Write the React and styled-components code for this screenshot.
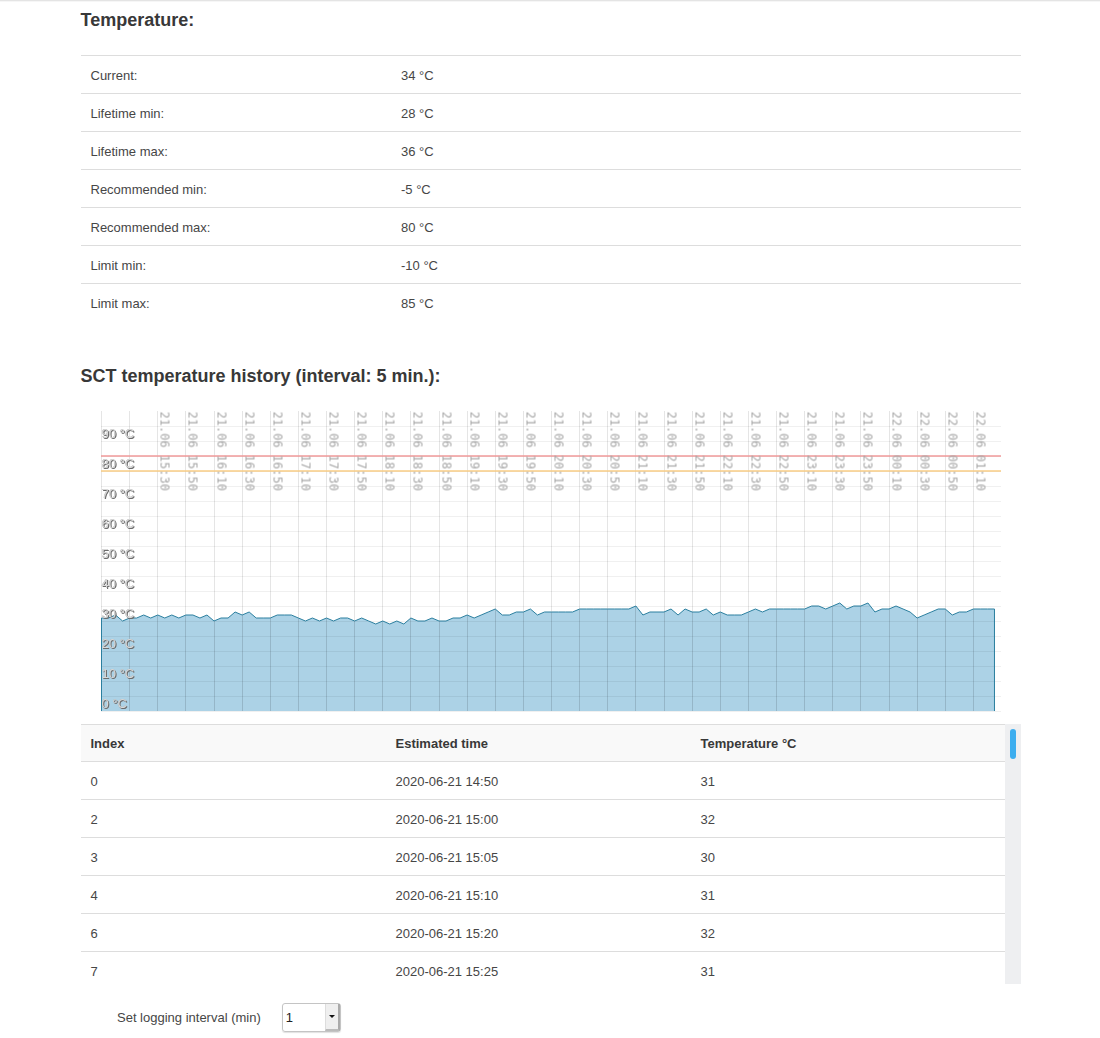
import React from "react";
import styled, { createGlobalStyle } from "styled-components";

const Global = createGlobalStyle`
  html, body { margin: 0; padding: 0; background: #fff; overflow: hidden; height: 1038px; }
  body { font-family: "Liberation Sans", Arial, sans-serif; font-size: 13px; color: #444; }
`;

const Page = styled.div`
  border-top: 1px solid #e4e4e4;
  box-shadow: inset 0 1px 0 #f6f6f6;
  box-sizing: border-box;
  height: 1038px;
  padding: 0 79px 0 81px;
  display: flex;
  flex-direction: column;
`;

const Title = styled.h4`
  margin: ${(p) => p.$top}px 0 ${(p) => p.$bottom}px -0.5px;
  font-size: 18px;
  line-height: 20px;
  font-weight: 700;
  color: #383838;
`;

const InfoTable = styled.div`
  display: flex;
  flex-direction: column;
`;

const InfoRow = styled.div`
  display: grid;
  grid-template-columns: 310.5px 1fr;
  height: 38px;
  box-sizing: border-box;
  border-top: 1px solid #ddd;
  align-items: center;
  padding: 1px 0 0 9.5px;
  color: #464646;
`;

const Chart = styled.svg`
  display: block;
  flex: none;
  width: 940px;
  height: 301px;
`;

const Tick = styled.text`
  font-family: "DejaVu Sans Mono", monospace;
  font-size: 12px;
  fill: #a6a6a6;
  filter: blur(0.25px);
`;

const Degree = styled.text`
  font-family: "Liberation Sans", Arial, sans-serif;
  font-size: 13px;
  fill: #d8d8d8;
  filter: drop-shadow(1px 1px 0.5px rgba(105, 105, 105, 0.95)) drop-shadow(0 0 0.3px rgba(130, 130, 130, 0.7));
`;

const HistoryWrap = styled.div`
  margin-top: 12px;
  height: 260px;
  flex: none;
  display: flex;
  overflow: hidden;
`;

const History = styled.div`
  flex: 1;
  min-width: 0;
  display: flex;
  flex-direction: column;
`;

const HistoryRow = styled.div`
  display: grid;
  grid-template-columns: 305px 305px 1fr;
  flex: none;
  height: ${(p) => (p.$head ? 37 : 38)}px;
  box-sizing: border-box;
  border-top: 1px solid #ddd;
  align-items: center;
  padding: ${(p) => (p.$head ? 0 : 1)}px 0 0 9.5px;
  background: ${(p) => (p.$head ? "#f9f9f9" : "#fff")};
  font-weight: ${(p) => (p.$head ? 700 : 400)};
  color: ${(p) => (p.$head ? "#383838" : "#464646")};
`;

const ScrollTrack = styled.div`
  width: 16px;
  flex: none;
  background: #eeeff1;
  padding: 5px 5px 0;
  box-sizing: border-box;
`;

const ScrollThumb = styled.div`
  width: 6px;
  height: 30px;
  border-radius: 3px;
  background: #3daeef;
`;

const Footer = styled.div`
  display: flex;
  align-items: center;
  margin-top: 19px;
  padding-left: 36px;
  gap: 21px;
`;

const FooterLabel = styled.span`
  color: #464646;
`;

const FakeSelect = styled.div`
  width: 59px;
  height: 29px;
  box-sizing: border-box;
  border: 1px solid #c4c4c4;
  border-radius: 3px;
  display: flex;
  box-shadow: 0 1px 1px rgba(0, 0, 0, 0.12);
`;

const SelectValue = styled.div`
  flex: 1;
  padding-left: 3px;
  line-height: 27px;
  color: #222;
  font-size: 13px;
`;

const SelectArrow = styled.div`
  width: 15px;
  background: #efefef;
  border-left: 1px solid #ddd;
  border-right: 2px solid #aaa;
  border-bottom: 2px solid #bbb;
  box-sizing: border-box;
  display: flex;
  align-items: center;
  justify-content: center;
  &::after {
    content: "";
    border-left: 3px solid transparent;
    border-right: 3px solid transparent;
    border-top: 3px solid #111;
  }
`;

const infoRows = [
  ["Current:", "34 °C"],
  ["Lifetime min:", "28 °C"],
  ["Lifetime max:", "36 °C"],
  ["Recommended min:", "-5 °C"],
  ["Recommended max:", "80 °C"],
  ["Limit min:", "-10 °C"],
  ["Limit max:", "85 °C"],
];

const historyRows = [
  ["0", "2020-06-21 14:50", "31"],
  ["2", "2020-06-21 15:00", "32"],
  ["3", "2020-06-21 15:05", "30"],
  ["4", "2020-06-21 15:10", "31"],
  ["6", "2020-06-21 15:20", "32"],
  ["7", "2020-06-21 15:25", "31"],
];

const temps = [
  31, 31, 32, 30, 31, 31, 32, 31, 32, 31, 32, 31, 32, 32, 31, 32, 30, 31, 31, 33,
  32, 33, 31, 31, 31, 32, 32, 32, 31, 30, 31, 30, 31, 30, 31, 31, 30, 31, 30, 29,
  30, 29, 30, 29, 31, 30, 30, 31, 30, 30, 31, 31, 32, 31, 32, 33, 34, 32, 32, 33,
  33, 34, 32, 33, 33, 33, 33, 33, 34, 34, 34, 34, 34, 34, 34, 34, 35, 32, 33, 33,
  33, 34, 32, 34, 33, 33, 34, 32, 33, 32, 32, 32, 33, 34, 33, 34, 34, 34, 34, 34,
  34, 35, 35, 34, 35, 36, 34, 35, 35, 36, 33, 34, 34, 35, 34, 33, 31, 32, 33, 34,
  34, 32, 33, 33, 34, 34, 34, 34,
];

const X0 = 20.5;
const STEP = 7.03125;
const BOTTOM = 300;
const px = (i) => X0 + STEP * i;
const py = (t) => BOTTOM - t * 3;

const linePts = temps.map((t, i) => `${px(i).toFixed(2)},${py(t)}`).join(" ");
const areaPts = `${px(0).toFixed(2)},${BOTTOM} ${linePts} ${px(temps.length - 1).toFixed(2)},${BOTTOM}`;

const verticals = Array.from({ length: 32 }, (_, k) => ({
  x: Math.floor(px(k * 4)) + 0.5,
  top: py(temps[k * 4]),
}));

const tickLabels = Array.from({ length: 30 }, (_, k) => {
  const minutes = 15 * 60 + 30 + k * 20;
  const day = minutes >= 1440 ? "22" : "21";
  const m = minutes % 1440;
  const hh = String(Math.floor(m / 60)).padStart(2, "0");
  const mm = String(m % 60).padStart(2, "0");
  return { text: `${day}.06 ${hh}:${mm}`, x: verticals[k + 2].x };
});

const horizontals = Array.from({ length: 20 }, (_, k) => 15.5 + k * 15);
const degrees = [90, 80, 70, 60, 50, 40, 30, 20, 10, 0];

function TemperatureChart() {
  return (
    <Chart viewBox="0 0 940 301" aria-label="SCT temperature history">
      <polygon points={areaPts} fill="#acd2e6" />
      {horizontals.map((y) => (
        <line key={y} x1="20" x2="920" y1={y} y2={y} stroke="rgba(0,0,0,0.06)" />
      ))}
      {verticals.map(({ x, top }) => (
        <g key={x}>
          <line x1={x} x2={x} y1="0" y2={top} stroke="rgba(0,0,0,0.1)" />
          <line x1={x} x2={x} y1={top} y2="300" stroke="rgba(0,0,0,0.13)" />
        </g>
      ))}
      <line x1="20" x2="920" y1="45" y2="45" stroke="#f09a9a" strokeWidth="1.6" />
      <line x1="20" x2="920" y1="60" y2="60" stroke="#f9cd85" strokeWidth="1.6" />
      <polyline points={areaPts} fill="none" stroke="#2b7f9f" strokeWidth="1" />
      {tickLabels.map((t) => (
        <Tick key={t.text} transform={`translate(${(t.x + 3).toFixed(1)} 0.5) rotate(90)`}>
          {t.text}
        </Tick>
      ))}
      {degrees.map((d) => (
        <Degree key={d} x="20.5" y={py(d) - 3.5}>
          {d} °C
        </Degree>
      ))}
    </Chart>
  );
}

export default function App() {
  return (
    <Page>
      <Global />
      <Title $top={9} $bottom={25}>Temperature:</Title>
      <InfoTable>
        {infoRows.map(([label, value]) => (
          <InfoRow key={label}>
            <span>{label}</span>
            <span>{value}</span>
          </InfoRow>
        ))}
      </InfoTable>
      <Title $top={45} $bottom={25}>SCT temperature history (interval: 5 min.):</Title>
      <TemperatureChart />
      <HistoryWrap>
        <History>
          <HistoryRow $head>
            <span>Index</span>
            <span>Estimated time</span>
            <span>Temperature °C</span>
          </HistoryRow>
          {historyRows.map(([a, b, c]) => (
            <HistoryRow key={a}>
              <span>{a}</span>
              <span>{b}</span>
              <span>{c}</span>
            </HistoryRow>
          ))}
        </History>
        <ScrollTrack>
          <ScrollThumb />
        </ScrollTrack>
      </HistoryWrap>
      <Footer>
        <FooterLabel>Set logging interval (min)</FooterLabel>
        <FakeSelect>
          <SelectValue>1</SelectValue>
          <SelectArrow />
        </FakeSelect>
      </Footer>
    </Page>
  );
}
